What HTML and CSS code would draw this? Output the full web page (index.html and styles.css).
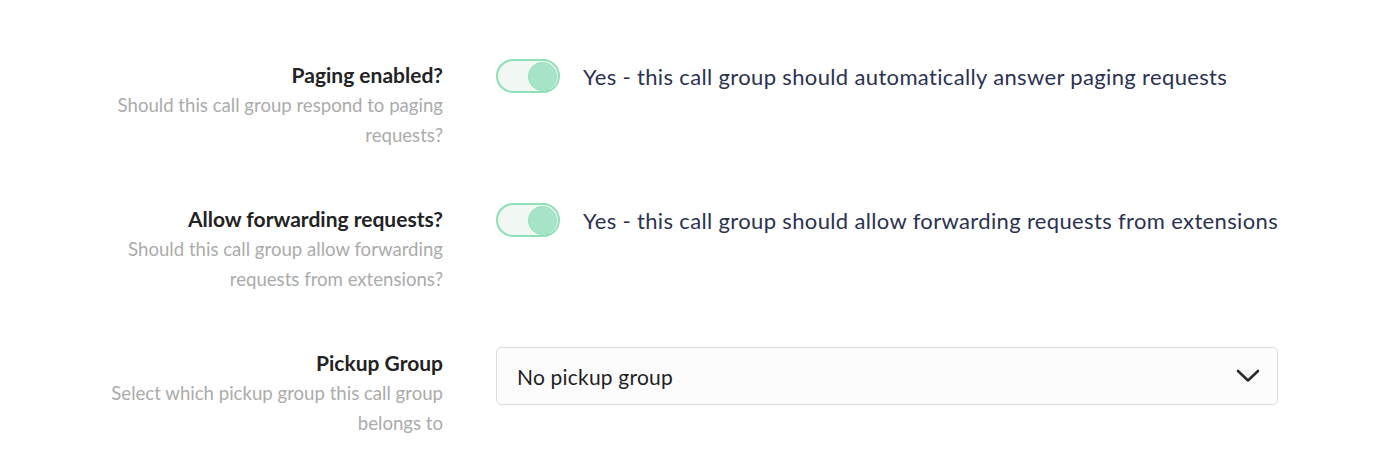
FILE: index.html
```html
<!DOCTYPE html>
<html lang="en">
<head>
<meta charset="utf-8">
<title>Call group settings</title>
<link rel="stylesheet" href="styles.css">
</head>
<body>
<form class="settings">
  <div class="row">
    <div class="label-col">
      <div class="label">Paging enabled?</div>
      <div class="help">Should this call group respond to paging requests?</div>
    </div>
    <div class="control-col">
      <label class="switch-line">
        <span class="switch"><span class="knob"></span></span>
        <span class="switch-text">Yes - this call group should automatically answer paging requests</span>
      </label>
    </div>
  </div>
  <div class="row">
    <div class="label-col">
      <div class="label">Allow forwarding requests?</div>
      <div class="help">Should this call group allow forwarding requests from extensions?</div>
    </div>
    <div class="control-col">
      <label class="switch-line">
        <span class="switch"><span class="knob"></span></span>
        <span class="switch-text">Yes - this call group should allow forwarding requests from extensions</span>
      </label>
    </div>
  </div>
  <div class="row">
    <div class="label-col">
      <div class="label">Pickup Group</div>
      <div class="help">Select which pickup group this call group belongs to</div>
    </div>
    <div class="control-col">
      <div class="select">
        <span class="select-value">No pickup group</span>
        <svg class="chevron" width="24" height="14" viewBox="0 0 24 14" aria-hidden="true">
          <path d="M2 2 L12 11.5 L22 2" fill="none" stroke="#2b2b2b" stroke-width="2.6" stroke-linecap="round" stroke-linejoin="round"/>
        </svg>
      </div>
    </div>
  </div>
</form>
</body>
</html>
```
FILE: styles.css
```css
html, body {
  margin: 0;
  padding: 0;
  background: #ffffff;
}

body {
  font-family: Lato, "Open Sans", "Liberation Sans", sans-serif;
}

.settings {
  display: flex;
  flex-direction: column;
  gap: 54px;
  padding: 60px 0 0 83px;
}

.row {
  display: grid;
  grid-template-columns: 360px 782px;
  column-gap: 53px;
  align-items: start;
}

.label-col {
  text-align: right;
}

.label {
  font-weight: 700;
  font-size: 21px;
  line-height: 30px;
  color: #232323;
}

.help {
  font-size: 18.6px;
  line-height: 30px;
  color: #ababab;
}

.control-col {
  margin-top: -1px;
}

.switch-line {
  display: flex;
  align-items: center;
  gap: 23px;
  height: 34px;
}

.switch {
  box-sizing: border-box;
  width: 64px;
  height: 34px;
  border: 2px solid #8fdfb9;
  border-radius: 17px;
  background: #f1f8f4;
  display: flex;
  align-items: center;
  justify-content: flex-end;
  padding-right: 1px;
  flex: none;
}

.knob {
  box-sizing: border-box;
  width: 29px;
  height: 29px;
  border-radius: 50%;
  background: #a8e4c8;
  border: 1px solid #93dcb9;
}

.switch-text {
  font-size: 22px;
  letter-spacing: 0.35px;
  color: #2b3251;
  white-space: nowrap;
}

.select {
  box-sizing: border-box;
  height: 58px;
  border: 1px solid #dcdcdc;
  border-radius: 5px;
  background: #fcfcfc;
  display: flex;
  align-items: center;
  justify-content: space-between;
  padding: 0 17px 0 20px;
}

.select-value {
  font-size: 21px;
  letter-spacing: 0.2px;
  color: #1f1f1f;
}

.chevron {
  display: block;
}
```
